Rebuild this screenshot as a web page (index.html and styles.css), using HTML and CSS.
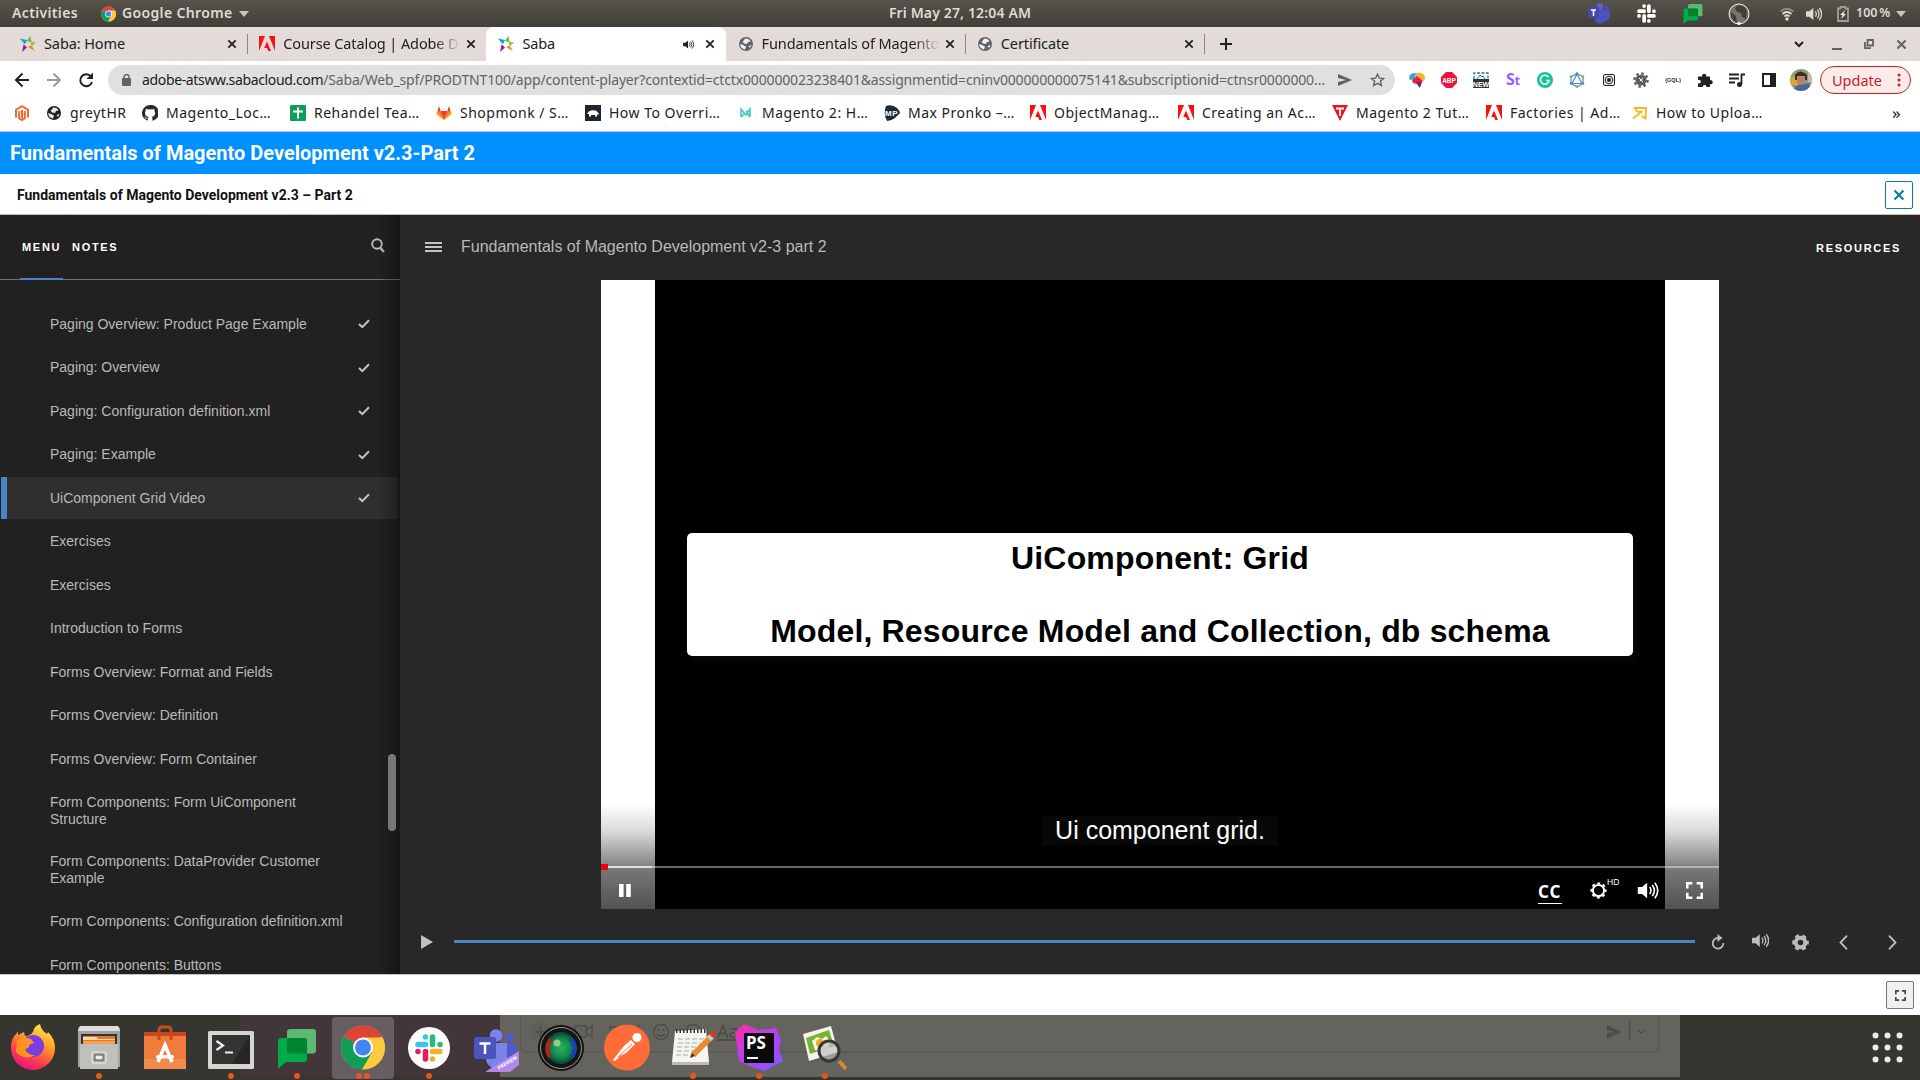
FILE: index.html
```html
<!DOCTYPE html>
<html lang="en">
<head>
<meta charset="utf-8">
<title>Saba</title>
<link rel="stylesheet" href="styles.css">
</head>
<body>
<svg class="defs" width="0" height="0">
  <symbol id="x" viewBox="0 0 10 10"><path d="M1.3 1.3 8.7 8.7M8.7 1.3 1.3 8.7" fill="none" stroke="currentColor" stroke-width="1.8"/></symbol>
  <symbol id="adobe" viewBox="0 0 16 16"><path fill="#fa0f12" d="M0 0h6L0 15zM10 0h6v15zM8 5.4 12 15H9.300L8.100 12H5.200z"/></symbol>
  <symbol id="saba" viewBox="0 0 16 16"><path fill="#6cbf3c" d="M10.500 0 11.500 6 9.500 6 7 4.500z"/><path fill="#0aa5dc" d="M0 2.500 7 4 6 6.500 4.500 8z"/><path fill="#9c1f8e" d="M3.500 8.500 5.500 10 7 11.500 2 16z"/><path fill="#f58220" d="M8 11 11.500 9.500 15 15z"/><path fill="#8cc63f" d="M11.500 5.500 16 6.500 12 10 10.500 8z"/></symbol>
  <symbol id="globe" viewBox="0 0 16 16"><circle cx="8" cy="8" r="7" fill="currentColor"/><path fill="#fff" opacity=".9" d="M7 2.500c3 0 5 1 5.500 3L10 6 9 8 6 7.500 4.500 5.500 6 4.500zM2 8l3 1 3 1.500-1 3C4 13 2.500 11 2 8zM10.500 10l3-1-1.500 3z"/></symbol>
  <symbol id="speaker" viewBox="0 0 24 20"><path fill="currentColor" d="M0 6h5l6-5v18l-6-5H0z"/><path fill="none" stroke="currentColor" stroke-width="1.900" d="M14 6q3 4 0 8M17 3.500q5 6.500 0 13M20 1q7 9 0 18"/></symbol>
  <symbol id="full" viewBox="0 0 16 16"><path fill="none" stroke="currentColor" stroke-width="2.400" d="M1.200 6V1.200H6M10 1.200h4.800V6M14.800 10v4.800H10M6 14.800H1.200V10"/></symbol>
  <symbol id="check" viewBox="0 0 12 10"><path fill="none" stroke="#c4c4c4" stroke-width="2" d="M1 5 4.300 8.200 11 1.300"/></symbol>
  <symbol id="chat" viewBox="0 0 38 40"><rect x="9" width="29" height="24.500" rx="3" fill="#5bb974"/><path fill="#00ac47" d="M3 9h23a3 3 0 0 1 3 3v18a3 3 0 0 1-3 3H8l-8 7V12a3 3 0 0 1 3-3z"/><path fill="#00832d" d="M9 9h17a3 3 0 0 1 3 3v12.500H12a3 3 0 0 1-3-3z"/></symbol>
  <symbol id="chrome" viewBox="0 0 44 44"><circle cx="22" cy="22" r="22" fill="#fcca3e"/><path fill="#db4437" d="M22 22 2.950 11A22 22 0 0 1 41.050 11z"/><path fill="#0f9d58" d="M22 22 2.950 11A22 22 0 0 0 21 44L31.500 27z"/><path fill="#fcca3e" d="M22 12H41.500A22 22 0 0 1 21 44L31 27z"/><circle cx="22" cy="22" r="10" fill="#fff"/><circle cx="22" cy="22" r="8" fill="#4285f4"/></symbol>
  <symbol id="slackmark" viewBox="0 0 28 28"><g fill="none" stroke-width="5.500" stroke-linecap="round"><path class="s-b" d="M3 10.500h7.500M10.500 3v.01"/><path class="s-g" d="M17.500 3v7.500M25 10.500v.01"/><path class="s-y" d="M17.500 17.500h7.500M17.500 25v.01"/><path class="s-r" d="M10.500 17.500v7.500M3 17.500v.01"/></g></symbol>
</svg>

<header class="topbar">
  <span class="activities">Activities</span>
  <svg class="tb-chrome" width="15" height="16"><use href="#chrome"/></svg>
  <span class="appname">Google Chrome</span>
  <svg class="tb-caret" width="10" height="6"><path fill="#c9c5bc" d="M0 0h10L5 6z"/></svg>
  <span class="clock">Fri May 27, 12:04 AM</span>
  <div class="tray">
    <svg width="23" height="21" viewBox="0 0 23 21"><circle cx="12" cy="3.500" r="3.400" fill="#5b62c4"/><circle cx="19" cy="4.500" r="2.300" fill="#4a50b5"/><path fill="#4b53bc" d="M7 7h15v6a5 5 0 0 1-5 5 6 6 0 0 1-10 0z"/><rect y="4" width="11" height="11" rx="1" fill="#434aa8"/><path stroke="#fff" stroke-width="1.500" d="M3 7h5M5.500 7v6"/></svg>
    <svg class="mono" width="19" height="19"><use href="#slackmark"/></svg>
    <svg width="20" height="20"><use href="#chat"/></svg>
    <svg width="22" height="22" viewBox="0 0 22 22"><circle cx="11" cy="11" r="10" fill="#77756f" stroke="#eee"/><path fill="#403f3a" d="M10 2q7 0 9 6l-1 8-4-2-1-4-4-1-2-4zM3 9l5 4 1 6q-5-1-6-7z"/><circle cx="11" cy="20.500" r="1.500" fill="#fff"/></svg>
    <svg width="14" height="14" viewBox="0 0 14 14"><g fill="none" stroke-width="1.800"><path stroke="#8d8a83" d="M.500 4.500Q7-1 13.500 4.500"/><path stroke="#dfdbd2" d="M2.500 7Q7 3 11.500 7M4.500 9.500Q7 7 9.500 9.500"/></g><circle cx="7" cy="12" r="1.700" fill="#dfdbd2"/></svg>
    <svg class="tv" width="16" height="14"><use href="#speaker"/></svg>
    <svg width="12" height="16" viewBox="0 0 12 16"><path fill="none" stroke="#a09d96" stroke-width="1.800" d="M1 2.500h2.500V1h5v1.500H11V15H1z"/><path fill="#eee" d="M8 4 3 9h2.500L4 13 9 8H6.500z"/></svg>
    <span class="pct">100 %</span>
    <svg width="10" height="6"><path fill="#c9c5bc" d="M0 0h10L5 6z"/></svg>
  </div>
</header>

<nav class="tabs">
  <div class="tab sep"><svg width="16" height="16"><use href="#saba"/></svg><span class="t">Saba: Home</span><svg class="close" width="10" height="10"><use href="#x"/></svg></div>
  <div class="tab"><svg width="16" height="16"><use href="#adobe"/></svg><span class="t fade">Course Catalog | Adobe D</span><svg class="close" width="10" height="10"><use href="#x"/></svg></div>
  <div class="tab active"><svg width="16" height="16"><use href="#saba"/></svg><span class="t">Saba</span><svg class="snd" width="11" height="9"><use href="#speaker"/></svg><svg class="close" width="10" height="10"><use href="#x"/></svg></div>
  <div class="tab sep"><svg class="gl" width="16" height="16"><use href="#globe"/></svg><span class="t fade">Fundamentals of Magento</span><svg class="close" width="10" height="10"><use href="#x"/></svg></div>
  <div class="tab sep"><svg class="gl" width="16" height="16"><use href="#globe"/></svg><span class="t">Certificate</span><svg class="close" width="10" height="10"><use href="#x"/></svg></div>
  <svg class="plus" width="12" height="12"><path stroke="#202124" stroke-width="2" d="M6 0v12M0 6h12"/></svg>
  <div class="winctl">
    <svg width="10" height="7"><path fill="none" stroke="#202124" stroke-width="2" d="M1 1 5 5 9 1"/></svg>
    <svg width="10" height="11"><path stroke="#5f6368" stroke-width="2" d="M0 10h10"/></svg>
    <svg width="10" height="10"><path fill="none" stroke="#5f6368" stroke-width="1.800" d="M3.500 1H9v5.500H3.500zM1 3v6.200h6"/></svg>
    <svg class="wx" width="11" height="11"><use href="#x"/></svg>
  </div>
</nav>

<div class="toolbar">
  <svg class="nav" width="90" height="20" viewBox="0 0 90 20"><g fill="none" stroke-width="2"><path stroke="#202124" d="M15 10H2M8.500 3.500 2 10l6.500 6.500"/><path stroke="#9a9a9a" d="M33 10h13M39.500 3.500 46 10l-6.500 6.500"/><path stroke="#202124" d="M77 6.500A6 6 0 1 0 78 12"/></g><path fill="#202124" d="M79 2.500V9h-6.500z"/></svg>
  <div class="url">
    <svg width="9" height="12" viewBox="0 0 9 12"><rect y="4" width="9" height="8" rx="1" fill="#5f6368"/><path fill="none" stroke="#5f6368" stroke-width="1.400" d="M2 5V3a2.500 2.500 0 0 1 5 0v2"/></svg>
    <span class="addr"><b>adobe-atsww.sabacloud.com</b>/Saba/Web_spf/PRODTNT100/app/content-player?contextid=ctctx000000023238401&amp;assignmentid=cninv000000000075141&amp;subscriptionid=ctnsr0000000…</span>
    <svg width="14" height="12"><path fill="#5f6368" d="M0 0 14 6 0 12V8L8 6 0 4z"/></svg>
    <svg width="15" height="14" viewBox="0 0 15 14"><path fill="none" stroke="#5f6368" stroke-width="1.400" d="m7.500 1.200 1.900 3.900 4.200.4-3.200 2.800 1 4.200-3.900-2.200-3.900 2.200 1-4.200L1.400 5.500l4.200-.4z"/></svg>
  </div>
  <div class="exts">
    <svg viewBox="0 0 16 16"><path fill="#3f9fd6" d="M0 6q0-5 7-5l-1 6-5 1z"/><path fill="#f9b52b" d="M7 1q9-1 9 5l-1 3-8-2z"/><path fill="#d9264c" d="m3 8 5-4 6 5-4 3v3l-2-3-4-1z"/><path fill="#86215e" d="M7 10h6l-2 6z"/></svg>
    <svg viewBox="0 0 16 16"><path fill="#f0123c" d="M5 0h6l5 5v6l-5 5H5l-5-5V5z"/><text x="8" y="11" class="i-abp">ABP</text></svg>
    <svg viewBox="0 0 16 16"><path fill="none" stroke="#137f91" stroke-width="1.300" stroke-dasharray="3 1.500" d="M1 7V1h14v6"/><path fill="none" stroke="#137f91" d="m4 7 3-4 2 2 1-1 2 3"/><rect y="7" width="16" height="9" fill="#333"/><text x="8" y="14.500" class="i-new">NEW</text></svg>
    <svg viewBox="0 0 16 16"><text x="1" y="13" class="i-st">S<tspan class="i-t">t</tspan></text></svg>
    <svg viewBox="0 0 16 16"><circle cx="8" cy="8" r="8" fill="#15c39a"/><path fill="none" stroke="#fff" stroke-width="1.500" d="M11.500 5A4.500 4.500 0 1 0 12 9.500V8.500H9"/></svg>
    <svg viewBox="0 0 16 16"><path fill="none" stroke="#4a8fc1" stroke-width="1.200" d="M8 1.500 14 5v6.500L8 15l-6-3.500V5zM8 2 3 11.500h10z"/><g fill="#76b852"><circle cx="2" cy="4.500" r="1.300"/><circle cx="14" cy="4.500" r="1.300"/><circle cx="8" cy="14.500" r="1.300"/></g><g fill="#4a8fc1"><circle cx="8" cy="1.500" r="1.300"/><circle cx="2" cy="11.500" r="1.300"/><circle cx="14" cy="11.500" r="1.300"/></g></svg>
    <svg viewBox="0 0 16 16"><rect x="2.500" y="2.500" width="11" height="11" rx="1.500" fill="#eee" stroke="#222"/><circle cx="8" cy="8" r="3.800" fill="none" stroke="#222"/><circle cx="8" cy="8" r="2" fill="#222"/></svg>
    <svg viewBox="0 0 16 16"><circle cx="8" cy="8" r="6.600" fill="none" stroke="#5f5f5f" stroke-width="2.400" stroke-dasharray="2.600 2.580"/><circle cx="8" cy="8" r="5.600" fill="#5f5f5f"/><path stroke="#fff" d="m6 6 4 4M7 9l3-3"/></svg>
    <svg viewBox="0 0 16 16"><text x="8" y="10.200" class="i-gql">{GQL}</text></svg>
    <svg viewBox="0 0 16 16"><path fill="#202124" d="M1 4.500h4.200a2.100 2.100 0 1 1 4 0h3.800v3.700a2.100 2.100 0 1 1 0 4V15H9.500a1.900 1.900 0 1 0-3.800 0H1v-3.700a1.900 1.900 0 1 0 0-3.300z"/></svg>
    <svg viewBox="0 0 16 16"><path fill="none" stroke="#202124" stroke-width="1.800" d="M0 2.500h10M0 6.500h10M0 10.500h6M12.500 12V2.500H16"/><circle cx="10.500" cy="12.500" r="2.500" fill="#202124"/></svg>
    <svg viewBox="0 0 16 16"><path fill="#202124" fill-rule="evenodd" d="M1 1h14v14H1zM3 3v10h6V3z"/></svg>
    <svg class="ava" viewBox="0 0 22 22"><clipPath id="av"><circle cx="11" cy="11" r="11"/></clipPath><g clip-path="url(#av)"><path fill="#8aa16d" d="M0 0h22v22H0z"/><path fill="#e2a03b" d="M0 8h8v8H0z"/><path fill="#3d2a2c" d="M5 6q5-7 12 0v5H5z"/><path fill="#b98560" d="M7 7h8v6l-4 4-4-3z"/><path fill="#4967a0" d="M3 22q2-7 8-6l8-2 3 8z"/><path fill="#c9b6a6" d="M18 3h4v10h-4z"/></g></svg>
  </div>
  <div class="update"><span>Update</span><svg width="4" height="14"><g fill="#c5221f"><circle cx="2" cy="2" r="1.500"/><circle cx="2" cy="7" r="1.500"/><circle cx="2" cy="12" r="1.500"/></g></svg></div>
</div>

<div class="bookmarks">
  <a><svg viewBox="0 0 16 16"><path fill="none" stroke="#ee672f" stroke-width="2" d="M2 12.500V4.700L8 1.200l6 3.500v7.800M5.200 6v7.500L8 15l2.800-1.500V6M8 5v8"/></svg></a>
  <a><svg viewBox="0 0 16 16" class="dk"><use href="#globe"/></svg>greytHR</a>
  <a><svg viewBox="0 0 16 16"><path fill="#24292e" d="M8 0a8 8 0 0 0-2.500 15.600c.4 0 .5-.2.5-.4v-1.500c-2.200.5-2.700-1-2.700-1-.4-.9-.9-1.200-.9-1.200 1-.2 1.400.6 1.900 1.200.6.700 1.400.500 1.800.3.1-.5.300-.9.500-1.100C4.500 11.500 3 10.800 3 8c0-1 .3-1.700.8-2.200-.1-.2-.3-1 .1-2.100 0 0 .7-.2 2.200.8a7.600 7.600 0 0 1 4 0c1.400-1 2.100-.8 2.100-.8.4 1.100.2 1.900.1 2.100.5.5.8 1.300.8 2.200 0 2.800-1.600 3.500-3.200 3.700.3.300.5.700.5 1.400v2.200c0 .2.1.4.5.4A8 8 0 0 0 8 0z"/></svg>Magento_Loc…</a>
  <a><svg viewBox="0 0 16 16"><rect width="16" height="16" rx="1" fill="#0f9d58"/><path stroke="#fff" stroke-width="2" d="M8 2.500v11M3 6.500h10"/></svg>Rehandel Tea…</a>
  <a><svg viewBox="0 0 16 16"><path fill="#e24329" d="M8 15 4.500 6h7z"/><path fill="#fc6d26" d="M8 15 .5 9l1-3h3zM8 15l7.500-6-1-3h-3z"/><path fill="#e24329" d="m1.500 6 1.500-5 1.700 5zM14.500 6 13 1l-1.700 5z"/><path fill="#fca326" d="m8 15-7.500-6 1-3zM8 15l7.500-6-1-3z"/></svg>Shopmonk / S…</a>
  <a><svg viewBox="0 0 16 16"><path fill="#1d2530" d="M0 0h16v16H0z"/><path fill="#fff" d="M2 9q1-3 4-3.500 5-1 7 2l1 2h-2v2h-2v-1.500H6V11.500H4V9z"/></svg>How To Overri…</a>
  <a><svg viewBox="0 0 16 16"><path fill="none" stroke="#3cc8c8" stroke-width="1.500" d="M3 12V4l5 6 4-6v8M3 12l4-4M8 6l4 6"/></svg>Magento 2: H…</a>
  <a><svg viewBox="0 0 16 16"><path fill="#1e2a3a" d="M2 1q6-2 11 2 3 3 3 5l-5 5q-4 3-8 3Q-1 9 2 1z"/><text x="7.500" y="11" class="i-mp">MP</text></svg>Max Pronko –…</a>
  <a><svg viewBox="0 0 16 16"><use href="#adobe"/></svg>ObjectManag…</a>
  <a><svg viewBox="0 0 16 16"><use href="#adobe"/></svg>Creating an Ac…</a>
  <a><svg viewBox="0 0 16 16"><path fill="#e9141d" d="M0 0h16L8 16z"/><path stroke="#fff" stroke-width="1.800" d="M4 3.500h8M8 3.500V11"/></svg>Magento 2 Tut…</a>
  <a><svg viewBox="0 0 16 16"><use href="#adobe"/></svg>Factories | Ad…</a>
  <a><svg viewBox="0 0 16 16"><path fill="none" stroke="#fbb72c" stroke-width="2" d="M1.500 3H14l-.5 10.500-4-2.500M1 13.500 10.500 6M3 3l2 3.500 4 .5"/></svg>How to Uploa…</a>
  <a class="more">»</a>
</div>

<div class="course">Fundamentals of Magento Development v2.3-Part 2</div>
<div class="subhead"><span>Fundamentals of Magento Development v2.3 – Part 2</span><div class="xbtn"><svg width="12" height="12"><use href="#x"/></svg></div></div>

<main class="player">
  <aside class="side">
    <div class="sidehead"><span class="m on">MENU</span><span class="m">NOTES</span><svg width="14" height="15" viewBox="0 0 14 15"><circle cx="6" cy="6" r="4.800" fill="none" stroke="#bbb" stroke-width="1.900"/><path stroke="#bbb" stroke-width="2.300" d="m9 9.500 4 4.500"/></svg></div>
    <ul class="list">
      <li><span>Paging Overview: Product Page Example</span><svg width="12" height="10"><use href="#check"/></svg></li>
      <li><span>Paging: Overview</span><svg width="12" height="10"><use href="#check"/></svg></li>
      <li><span>Paging: Configuration definition.xml</span><svg width="12" height="10"><use href="#check"/></svg></li>
      <li><span>Paging: Example</span><svg width="12" height="10"><use href="#check"/></svg></li>
      <li class="cur"><span>UiComponent Grid Video</span><svg width="12" height="10"><use href="#check"/></svg></li>
      <li><span>Exercises</span></li>
      <li><span>Exercises</span></li>
      <li><span>Introduction to Forms</span></li>
      <li><span>Forms Overview: Format and Fields</span></li>
      <li><span>Forms Overview: Definition</span></li>
      <li><span>Forms Overview: Form Container</span></li>
      <li class="two"><span>Form Components: Form UiComponent<br>Structure</span></li>
      <li class="two"><span>Form Components: DataProvider Customer<br>Example</span></li>
      <li><span>Form Components: Configuration definition.xml</span></li>
      <li><span>Form Components: Buttons</span></li>
    </ul>
    <div class="shade"></div>
    <div class="thumb"></div>
  </aside>
  <section class="stage">
    <div class="stagehead"><svg width="17" height="10"><path stroke="#c4c4c4" stroke-width="2" d="M0 1h17M0 5h17M0 9h17"/></svg><span class="ttl">Fundamentals of Magento Development v2-3 part 2</span><span class="res">RESOURCES</span></div>
    <div class="video">
      <div class="frame">
        <div class="card"><p>UiComponent: Grid</p><p>Model, Resource Model and Collection, db schema</p></div>
        <div class="cap">Ui component grid.</div>
      </div>
      <div class="vctl">
        <div class="seek"><i class="buf"></i><i class="pos"></i></div>
        <div class="vbtns">
          <svg width="12" height="13"><path fill="#fff" d="M0 0h4.600v13H0zM7.200 0h4.600v13H7.200z"/></svg>
          <span class="cc">CC</span>
          <svg class="vgear" width="17" height="17" viewBox="0 0 17 17"><circle cx="8.500" cy="8.500" r="5.600" fill="none" stroke="#fff" stroke-width="2"/><circle cx="8.500" cy="8.500" r="7.200" fill="none" stroke="#fff" stroke-width="1.800" stroke-dasharray="3 2.655" stroke-dashoffset="1.500"/></svg>
          <span class="hd">HD</span>
          <svg class="vvol" width="22" height="17"><use href="#speaker"/></svg>
          <svg class="vfull" width="17" height="17"><use href="#full"/></svg>
        </div>
      </div>
    </div>
    <div class="controls">
      <svg width="12" height="14"><path fill="#c0c0c0" d="M0 0 12 7 0 14z"/></svg>
      <div class="bar"></div>
      <svg class="c1" width="14" height="16" viewBox="0 0 14 16"><path fill="none" stroke="#bbb" stroke-width="1.800" d="M7 4a5.300 5.300 0 1 0 5.300 5"/><path fill="#bbb" d="M6.500 0v8l5-4z"/></svg>
      <svg class="c2" width="17" height="15"><use href="#speaker"/></svg>
      <svg class="c3" width="17" height="17" viewBox="0 0 17 17"><circle cx="8.500" cy="8.500" r="4.800" fill="none" stroke="#bbb" stroke-width="4"/><circle cx="8.500" cy="8.500" r="7" fill="none" stroke="#bbb" stroke-width="2.600" stroke-dasharray="4 3.330" stroke-dashoffset="2"/></svg>
      <svg class="c4" width="9" height="15"><path fill="none" stroke="#bbb" stroke-width="1.900" d="M8 .7 1.500 7.500 8 14.300"/></svg>
      <svg class="c5" width="9" height="15"><path fill="none" stroke="#bbb" stroke-width="1.900" d="M1 .7 7.500 7.500 1 14.300"/></svg>
    </div>
  </section>
</main>

<div class="footer"><div class="fbtn"><svg width="11" height="11"><use href="#full"/></svg></div></div>

<footer class="dock">
  <svg class="ghost" width="1920" height="65" viewBox="0 1015 1920 65">
    <path fill="#42363b" d="M240 1015h260v62H240z"/><path fill="#64635e" d="M500 1015h1180v62H500z"/>
    <g fill="none" stroke="#4d4c48" stroke-width="1.300"><path stroke="#5a5954" d="M520.500 1016v31q0 5 6 5H1653q6 0 6-6v-30"/><circle cx="540" cy="1032" r="11" fill="#605f5a" stroke="none"/><path d="M535 1032h11M540.500 1026v11M561.500 1024v18M577 1026h9v11h-11v-9q0-2 2-2zM586 1030l6-4v11l-6-4M610 1030v-3h12v3M638.500 1024v14M1629.500 1022v19"/><circle cx="661" cy="1032" r="7.500"/><path d="M657 1034q4 4 8 0M658.500 1029v2M663.500 1029v2"/><circle cx="693" cy="1032" r="7.500"/><path d="m1638 1030 3 3 4-3"/></g>
    <path fill="#4d4c48" d="m1607 1025 14 7-14 7v-6l8-1-8-2z"/><text x="717" y="1038" class="aa">Aa</text>
  </svg>
  <div class="apps">
    <div class="app"><svg viewBox="0 0 66 65"><defs><linearGradient id="ff" x1=".8" y1="0" x2=".3" y2="1"><stop offset="0" stop-color="#fff14a"/><stop offset=".4" stop-color="#ff9a22"/><stop offset=".75" stop-color="#ff3750"/><stop offset="1" stop-color="#e3138e"/></linearGradient></defs><path fill="url(#ff)" d="M33 55A22 22 0 0 1 11 32q0-9 6-14l1-2v4l6-3 1 4q5 0 8-4 1-6 7-8 1 6 7 10l1-2q7 7 7 16a22 22 0 0 1-22 22z"/><circle cx="33" cy="31" r="11" fill="#7a3ddf"/><path fill="#ff9423" d="M17 26q7-5 14-2l3 4q-4 1-5 2 1 3-4 4 3 7 11 6-12 6-20-3z"/></svg></div>
    <div class="app run"><svg viewBox="0 0 66 65"><path fill="#a3a3a1" d="M12 15q0-4 4-4h34q4 0 4 4v37H12z"/><path fill="#dededc" d="M14 11h38l2 5H12z"/><path fill="#333" d="M15 19h36v10H15z"/><path fill="#e8762b" d="M17 21h32v7H17z"/><path fill="#ffd9a5" d="M17 22h13l2 2h17v1H17z"/><path fill="#f7a04f" d="M17 26h32v3H17z"/><path fill="#bfbfbd" d="M14 29h38v25H14z"/><rect x="26" y="37" width="14" height="11" rx="2.500" fill="#a9a9a7" stroke="#e2e2e2" stroke-width="1.500"/><rect x="29" y="40" width="8" height="5" fill="#eee" stroke="#555"/></svg></div>
    <div class="app"><svg viewBox="0 0 66 65"><path fill="#c5481f" d="M12 17h42v5H12z"/><path fill="#ef7b3c" d="M12 21h42v33H12z"/><path fill="#f08a4d" d="M12 44h42v10H12z"/><path fill="none" stroke="#c9491e" stroke-width="3" d="M27 25V15q0-3 3-3h6q3 0 3 3v10"/><path fill="none" stroke="#fff" stroke-width="3.500" d="m26 47 7-17 7 17"/><rect x="24" y="40" width="18" height="3.500" rx="1.500" fill="#fff"/></svg></div>
    <div class="app run"><svg viewBox="0 0 66 65"><rect x="10" y="16" width="46" height="38" rx="1.500" fill="#d5d5d3"/><path fill="#262625" d="M14 20h38v29H14z"/><path fill="#3e3e3d" d="M14 20h38L34 49H14z" opacity=".6"/><path fill="none" stroke="#eee" stroke-width="2.200" d="m18.500 26 6.500 4.500-6.500 4.500M27 37.500h8"/></svg></div>
    <div class="app run"><svg viewBox="0 0 66 65"><use href="#chat" x="14" y="14" width="38" height="40"/></svg></div>
    <div class="app run2 focus"><svg viewBox="0 0 66 65"><use href="#chrome" x="11" y="10.500" width="44" height="44"/></svg></div>
    <div class="app run"><svg viewBox="0 0 66 65"><circle cx="33" cy="33" r="21" fill="#fff"/><use href="#slackmark" x="19" y="19" width="28" height="28"/></svg></div>
    <div class="app"><svg viewBox="0 0 66 65"><circle cx="34" cy="20.500" r="6.300" fill="#7b83eb"/><circle cx="47.500" cy="22.500" r="4.300" fill="#5059c9"/><path fill="#5059c9" d="M41 28h13v16q-6 6-13 1z"/><path fill="#7b83eb" d="M24 28h21v16q-3 11-15 9-6-4-6-9z"/><path fill="#4b53bc" d="M12 24q0-2 2-2h18q2 0 2 2v18q0 2-2 2H14q-2 0-2-2z"/><path stroke="#fff" stroke-width="2.500" d="M17.500 28.500h11M23 28.500V39"/><path fill="#b18ae8" d="M57 36v14L48 57H23z"/><text x="37" y="55" class="prev" transform="rotate(-32 37 55)">PREVIEW</text></svg></div>
    <div class="app"><svg viewBox="0 0 66 65"><defs><radialGradient id="lens"><stop offset="0" stop-color="#2bb25c"/><stop offset=".6" stop-color="#128a4c"/><stop offset="1" stop-color="#083f38"/></radialGradient></defs><circle cx="33" cy="33" r="23" fill="#111"/><circle cx="33" cy="33" r="20.500" fill="#151515" stroke="#999"/><circle cx="33" cy="33" r="16" fill="url(#lens)"/><path fill="none" stroke="#b3241d" stroke-width="4" d="M22 42q-6-9 1-18"/><path fill="none" stroke="#1840c0" stroke-width="4" d="M44 42q6-9-1-18"/><circle cx="29" cy="28" r="3.500" fill="#8bd08a"/></svg></div>
    <div class="app"><svg viewBox="0 0 66 65"><circle cx="33" cy="32.500" r="23" fill="#ff6c37"/><circle cx="43" cy="22.500" r="4.500" fill="#fff"/><path fill="#fff" d="m37 25 4 4-9 9-6 3-5 5-2-1 7-9 4-5z"/><path stroke="#ff6c37" d="m24 42 14-13"/></svg></div>
    <div class="app run"><svg viewBox="0 0 66 65"><path fill="#f5f4ef" d="m15 16 31-2 3 33H12z"/><path fill="#bbb" d="M12 47h37v3H12z"/><path fill="none" stroke="#333" stroke-width="4" stroke-dasharray="1.500 2" d="M16 16h31"/><path stroke="#aaa" stroke-dasharray="5 2" d="M18 24h26M18 28h22M17 32h20M17 36h16M16 40h18"/><path stroke="#e88c27" stroke-width="6" d="m33 40 18-18"/><path stroke="#ccc" stroke-width="6" d="m49 24 3-3"/><path stroke="#d33a2c" stroke-width="6" d="m51 21 4-4"/><path fill="#333" d="m30 43 2-5 3 3z"/></svg></div>
    <div class="app run"><svg viewBox="0 0 66 65"><defs><linearGradient id="ps" x1="0" y1="0" x2="1" y2="1"><stop offset="0" stop-color="#ff2d9a"/><stop offset=".4" stop-color="#c23bf0"/><stop offset="1" stop-color="#7b5cff"/></linearGradient></defs><path fill="url(#ps)" d="m18 9 15 6 17-2 5 12-2 10 4 11-19 10-15-5-10-5-4-29z"/><path fill="#0a0a0a" d="M18 18h30v30H18z"/><text x="20" y="34" class="pst">PS</text><path fill="#fff" d="M21 42h11v2H21z"/></svg></div>
    <div class="app run"><svg viewBox="0 0 66 65"><path fill="#f4f4f0" d="m11 19 28-8 7 26-29 9z"/><path fill="#7ab32e" d="m14 23 23-8 5 16-24 8z"/><path fill="#f4f4f0" d="m20 26 5-4 5 2 4-3 4 5-1 6-8 4-6-1z"/><circle cx="28" cy="28" r="4" fill="#f5a623"/><circle cx="37" cy="36" r="10" fill="#bbb" fill-opacity=".65" stroke="#34383c" stroke-width="3"/><path stroke="#c98a3c" stroke-width="4" d="m47 46 7 8"/></svg></div>
  </div>
  <svg class="grid" width="31" height="31" viewBox="0 0 31 31"><g fill="#eeece8"><circle cx="3.500" cy="3.500" r="3"/><circle cx="15.500" cy="3.500" r="3"/><circle cx="27.500" cy="3.500" r="3"/><circle cx="3.500" cy="15.500" r="3"/><circle cx="15.500" cy="15.500" r="3"/><circle cx="27.500" cy="15.500" r="3"/><circle cx="3.500" cy="27.500" r="3"/><circle cx="15.500" cy="27.500" r="3"/><circle cx="27.500" cy="27.500" r="3"/></g></svg>
</footer>
</body>
</html>
```
FILE: styles.css
```css
* { box-sizing: border-box; }
body { margin: 0; width: 1920px; height: 1080px; overflow: hidden; display: flex; flex-direction: column; background: #fff; font-family: "Noto Sans", sans-serif; font-size: 14px; color: #202124; }
svg { display: block; flex: none; }
.defs { position: absolute; }
span, a { white-space: nowrap; }

.topbar { height: 27px; flex: none; display: flex; align-items: center; position: relative; padding-left: 12px; background: linear-gradient(#57534b, #403f39); color: #dfdbd2; font-weight: 600; font-size: 14px; letter-spacing: .35px; }
.topbar span { line-height: 20px; padding-bottom: 2px; }
.activities { width: 89px; }
.tb-chrome { margin-right: 6px; }
.appname { width: 117px; }
.clock { position: absolute; left: 0; right: 0; text-align: center; top: 3px; letter-spacing: .15px; }
.tray { margin-left: auto; display: grid; grid-template-columns: 49px 46px 45px 52px 26px 31px 19px 40px 10px; align-items: center; margin-right: 14px; }
.tray .pct { font-size: 12.500px; letter-spacing: 0; word-spacing: -1.500px; }
.tv { color: #dfdbd2; }
.s-b { stroke: var(--mark, #36c5f0); }
.s-g { stroke: var(--mark, #2eb67d); }
.s-y { stroke: var(--mark, #ecb22e); }
.s-r { stroke: var(--mark, #e01e5a); }
.mono { --mark: #fff; }

.tabs { height: 34px; flex: none; display: flex; align-items: center; background: #e3dbd8; padding-left: 8px; }
.tab { width: 239.200px; height: 34px; display: flex; align-items: center; padding: 0 9px 0 12px; position: relative; }
.tab .t { flex: 1; margin: 0 5px 2px 8px; font-size: 14.500px; letter-spacing: -.1px; }
.tab .fade { -webkit-mask-image: linear-gradient(90deg, #000 85%, transparent); mask-image: linear-gradient(90deg, #000 85%, transparent); }
.tab.active { background: #fff; border-radius: 8px 8px 0 0; padding-right: 10px; }
.sep::after { content: ""; position: absolute; right: -1px; top: 7px; width: 1px; height: 20px; background: #8d8885; }
.close { margin-right: 1px; }
.snd { margin-right: 11px; }
.gl { color: #5f6368; }
.plus { margin-left: 16px; }
.winctl { margin-left: auto; display: flex; align-items: center; margin-right: 13px; gap: 22px; }
.winctl svg:first-child { margin-right: 6px; }
.wx { color: #5f6368; }

.toolbar { height: 38px; flex: none; display: flex; align-items: center; }
.nav { margin: 0 4px 0 14px; }
.url { width: 1287px; height: 30px; border-radius: 15px; background: #e0e0e0; display: flex; align-items: center; padding: 0 10px 0 14px; color: #5f6368; }
.addr { width: 1196px; flex: none; margin-left: 11px; font-size: 14px; letter-spacing: -.155px; padding-bottom: 1px; }
.addr b { font-weight: 400; color: #202124; letter-spacing: -.350px; }
.url svg:last-child { margin-left: 18px; }
.exts { display: flex; align-items: center; gap: 16px; margin-left: 14px; }
.exts svg { width: 16px; height: 16px; }
.exts .ava { width: 22px; height: 22px; margin-left: -3px; }
.update { margin-left: 8px; width: 91px; height: 28px; border: 1px solid #c5221f; border-radius: 14px; background: #fbeceb; display: flex; align-items: center; padding: 0 9px 0 11px; justify-content: space-between; color: #c5221f; font-size: 14.500px; }
.update span { padding-bottom: 1px; }
.i-abp { font: bold 6.500px "Liberation Sans", sans-serif; fill: #fff; text-anchor: middle; }
.i-new { font: bold 7px "Liberation Sans", sans-serif; fill: #fff; text-anchor: middle; }
.i-st { font: bold 16px "Noto Sans", sans-serif; fill: #a259ff; }
.i-t { font-size: 12px; }
.i-gql { font: bold 5.500px "Liberation Sans", sans-serif; fill: #333; text-anchor: middle; }
.i-mp { font: bold 8px "Liberation Sans", sans-serif; fill: #fff; text-anchor: middle; }

.bookmarks { height: 33px; flex: none; border-bottom: 1px solid #c8c8c8; display: grid; grid-template-columns: 32px 96px 148px 146px 149px 153px 146px 146px 148px 154px 154px 146px 259px 30px; padding-left: 14px; padding-bottom: 5px; align-items: center; font-size: 14px; }
.bookmarks a { display: flex; align-items: center; gap: 8px; letter-spacing: .500px; }
.bookmarks svg { width: 16px; height: 16px; }
.dk { color: #202124; }
.bookmarks .more { font-size: 17px; padding-left: 1px; }

.course { height: 42px; flex: none; background: #0090ff; color: #fff; font: bold 20px/43px Roboto, sans-serif; padding-left: 10px; }
.subhead { height: 41px; flex: none; border-bottom: 1px solid #bdbdbd; display: flex; align-items: center; justify-content: space-between; padding: 1px 7px 0 17px; font: bold 14px Roboto, sans-serif; color: #111; }
.xbtn { width: 28px; height: 28px; border: 1px solid #0b7ba5; border-radius: 2px; color: #0b7ba5; display: grid; place-items: center; }

.player { height: 759px; flex: none; display: flex; font-family: "Liberation Sans", sans-serif; color: #b9b9b9; background: #282828; }
.side { width: 400px; position: relative; background: #212121; overflow: hidden; }
.sidehead { height: 65px; border-bottom: 1px solid #707070; display: flex; align-items: center; padding: 0 15px 0 20px; }
.m { font-size: 11px; font-weight: bold; letter-spacing: 1.700px; color: #fff; height: 65px; line-height: 64px; padding: 0 2px; border-bottom: 2px solid transparent; }
.m.on { border-color: #4a86c5; width: 43px; margin-right: 7px; }
.sidehead svg { margin-left: auto; margin-bottom: 4px; }
.list { list-style: none; margin: 23px 0 0; padding: 0; font-size: 14px; line-height: 17px; }
.list li { min-height: 42px; margin-bottom: 1.500px; display: flex; justify-content: space-between; align-items: center; padding: 12.500px 31px 12.500px 50px; width: 398px; }
.list li.two { padding-top: 12px; padding-bottom: 12px; }
.list li svg { margin-right: -3px; }
.list .cur { background: #2f2f2f; box-shadow: inset 1px 0 #222, inset 7px 0 #4a86c5; }
.shade { position: absolute; top: 0; right: 0; width: 22px; height: 100%; background: linear-gradient(90deg, transparent, rgba(0,0,0,.35)); }
.thumb { position: absolute; left: 388px; top: 539px; width: 8px; height: 77px; border-radius: 4px; background: #777; }

.stage { flex: 1; display: flex; flex-direction: column; }
.stagehead { height: 65px; display: flex; align-items: center; padding: 0 19px 0 25px; }
.stagehead svg { margin-bottom: 1px; }
.ttl { font-size: 16px; margin-left: 19px; padding-bottom: 2px; }
.res { margin-left: auto; color: #fff; font-size: 11px; font-weight: bold; letter-spacing: 1.700px; }
.video { width: 1118px; height: 629px; margin-left: 201px; background: #fff; position: relative; }
.frame { width: 1010px; height: 629px; margin-left: 54px; background: #000; display: flex; flex-direction: column; align-items: center; }
.card { width: 946px; height: 123px; margin-top: 253px; background: #fff; border-radius: 5px; color: #000; font-weight: bold; font-size: 32px; letter-spacing: .170px; text-align: center; line-height: 73px; display: flex; flex-direction: column; justify-content: center; box-shadow: 2px 5px 8px #0b0b0b; }
.card p { margin: 0; }
.cap { position: relative; z-index: 1; margin-top: 160px; padding: 0 13px; height: 29px; line-height: 28px; font-size: 25px; color: #fff; background: #080808; }
.vctl { position: absolute; left: 0; right: 0; bottom: 0; height: 105px; background: linear-gradient(transparent, rgba(0,0,0,.14) 25%, rgba(0,0,0,.45) 56%, rgba(0,0,0,.54) 64%, rgba(0,0,0,.68)); }
.seek { margin-top: 62px; height: 2px; background: rgba(255,255,255,.4); display: flex; align-items: center; position: relative; }
.buf { width: 51px; height: 2px; background: rgba(255,255,255,.6); }
.pos { position: absolute; left: 0; width: 7px; height: 6px; background: #f4000b; }
.vbtns { display: flex; align-items: center; height: 41px; padding: 4px 16px 0 18px; color: #fff; }
.cc { margin-left: auto; margin-top: 5px; border-bottom: 1px solid #fff; font: bold 17px/20px "Noto Sans", sans-serif; padding-bottom: 1px; width: 24px; letter-spacing: 1px; }
.vgear { margin-left: 28px; }
.hd { font-size: 8.500px; margin-bottom: 17px; width: 12px; }
.vvol { margin-left: 18px; }
.vfull { margin-left: 27px; }
.controls { flex: 1; display: flex; align-items: center; padding-left: 21px; color: #bbb; }
.bar { width: 1241px; height: 3px; background: #4a86c5; margin: 0 16px 0 21px; }
.c1 { margin-top: 1px; }
.c2 { margin-left: 27px; margin-bottom: 3px; }
.c3 { margin-left: 23px; margin-top: 1px; }
.c4 { margin-left: 30px; margin-top: 1px; }
.c5 { margin-left: 40px; margin-top: 1px; }

.footer { height: 41px; flex: none; border-top: 1px solid #c4c4c4; display: flex; align-items: center; justify-content: flex-end; padding-right: 6px; }
.fbtn { width: 28px; height: 28px; border: 1px solid #777; border-radius: 2px; background: #f0f0f0; display: grid; place-items: center; color: #444; }

.dock { height: 65px; flex: none; background: #363530; position: relative; display: flex; align-items: center; justify-content: space-between; padding-right: 17px; }
.ghost { position: absolute; left: 0; top: 0; }
.aa { font: 18px "Noto Sans", sans-serif; fill: #4b4a46; text-decoration: underline; }
.apps { display: flex; position: relative; }
.app { width: 66px; height: 65px; position: relative; }
.app svg { width: 66px; height: 65px; position: relative; }
.focus::before { content: ""; position: absolute; left: 2px; top: 2px; width: 62px; height: 62px; border-radius: 4px; background: #665e62; }
.run::after, .run2::after { content: ""; position: absolute; left: 30px; bottom: 1px; width: 6px; height: 6px; border-radius: 50%; background: #e95420; }
.run2::after { left: 26px; box-shadow: 8px 0 #e95420; }
.prev { font: bold 5px "Noto Sans", sans-serif; fill: #fff; }
.pst { font: bold 17px "Noto Sans", sans-serif; fill: #fff; }
```
